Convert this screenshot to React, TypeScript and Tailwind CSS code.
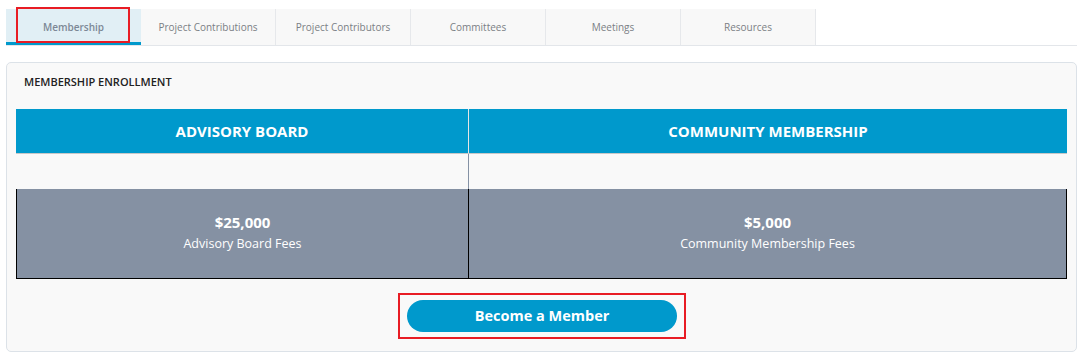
import React from 'react';

const tabs = ['Membership', 'Project Contributions', 'Project Contributors', 'Committees', 'Meetings', 'Resources'];

const plans = [
  { title: 'ADVISORY BOARD', price: '$25,000', label: 'Advisory Board Fees' },
  { title: 'COMMUNITY MEMBERSHIP', price: '$5,000', label: 'Community Membership Fees' },
];

const App: React.FC = () => {
  return (
    <div className="w-[1089px] h-[364px] bg-white font-['Open_Sans',sans-serif] pt-[9px] px-[6px] overflow-hidden">
      {/* tabs */}
      <div className="flex w-[1071px] border-b border-[#e3e6ea] h-[37px]">
        {tabs.map((t, i) => (
          <div
            key={t}
            className={`relative w-[135px] h-[36px] flex items-center justify-center text-[10px] ${
              i === 0
                ? 'bg-[#e1eff5] text-[#7c8896] font-semibold border-b-[3px] border-[#0099cc]'
                : 'bg-[#f8f8f8] text-[#7b7f85] border-r border-[#e6e8eb]'
            }`}
          >
            {i === 0 && <span className="absolute left-[10px] top-[-2px] w-[114px] h-[36px] border-2 border-[#e81c24]" />}
            <span className={i === 0 ? 'pt-[3px]' : ''}>{t}</span>
          </div>
        ))}
      </div>

      {/* card */}
      <div className="mt-[16px] w-[1071px] h-[290px] bg-[#f9f9f9] border border-[#dce2e8] rounded-[5px] px-[9px]">
        <div className="h-[46px] pl-[8px] pb-[7px] flex items-center text-[11px] font-semibold text-[#222]">
          MEMBERSHIP ENROLLMENT
        </div>

        <div className="w-[1051px]">
          <div className="grid grid-cols-[453px_1fr] h-[45px] bg-[#0099cc] border-b border-[#c8c8c8]">
            {plans.map((p, i) => (
              <div
                key={p.title}
                className={`flex items-center justify-center text-white font-bold text-[15px] ${i === 0 ? 'border-r border-[#e6e6e6]' : ''}`}
              >
                {p.title}
              </div>
            ))}
          </div>
          <div className="grid grid-cols-[453px_1fr] h-[35px] bg-[#f9f9f9]">
            <div className="border-r border-[#8592a5]" />
            <div />
          </div>
          <div className="grid grid-cols-[452px_1fr] h-[90px] bg-[#8591a3] border border-t-0 border-black">
            {plans.map((p, i) => (
              <div
                key={p.title}
                className={`flex flex-col items-center justify-center text-white pb-[1px] ${i === 0 ? 'border-r border-black' : ''}`}
              >
                <div className="text-[15px] font-bold leading-[22px]">{p.price}</div>
                <div className="text-[12.5px] leading-[22px]">{p.label}</div>
              </div>
            ))}
          </div>
        </div>

        <div className="flex justify-center mt-[14px]">
          <div className="border-2 border-[#e81c24] w-[288px] h-[46px] flex items-center justify-center ml-[1px]">
            <button className="w-[270px] h-[32px] rounded-full bg-[#0099cc] text-white font-bold text-[14.5px]">
              Become a Member
            </button>
          </div>
        </div>
      </div>
    </div>
  );
};

export default App;
